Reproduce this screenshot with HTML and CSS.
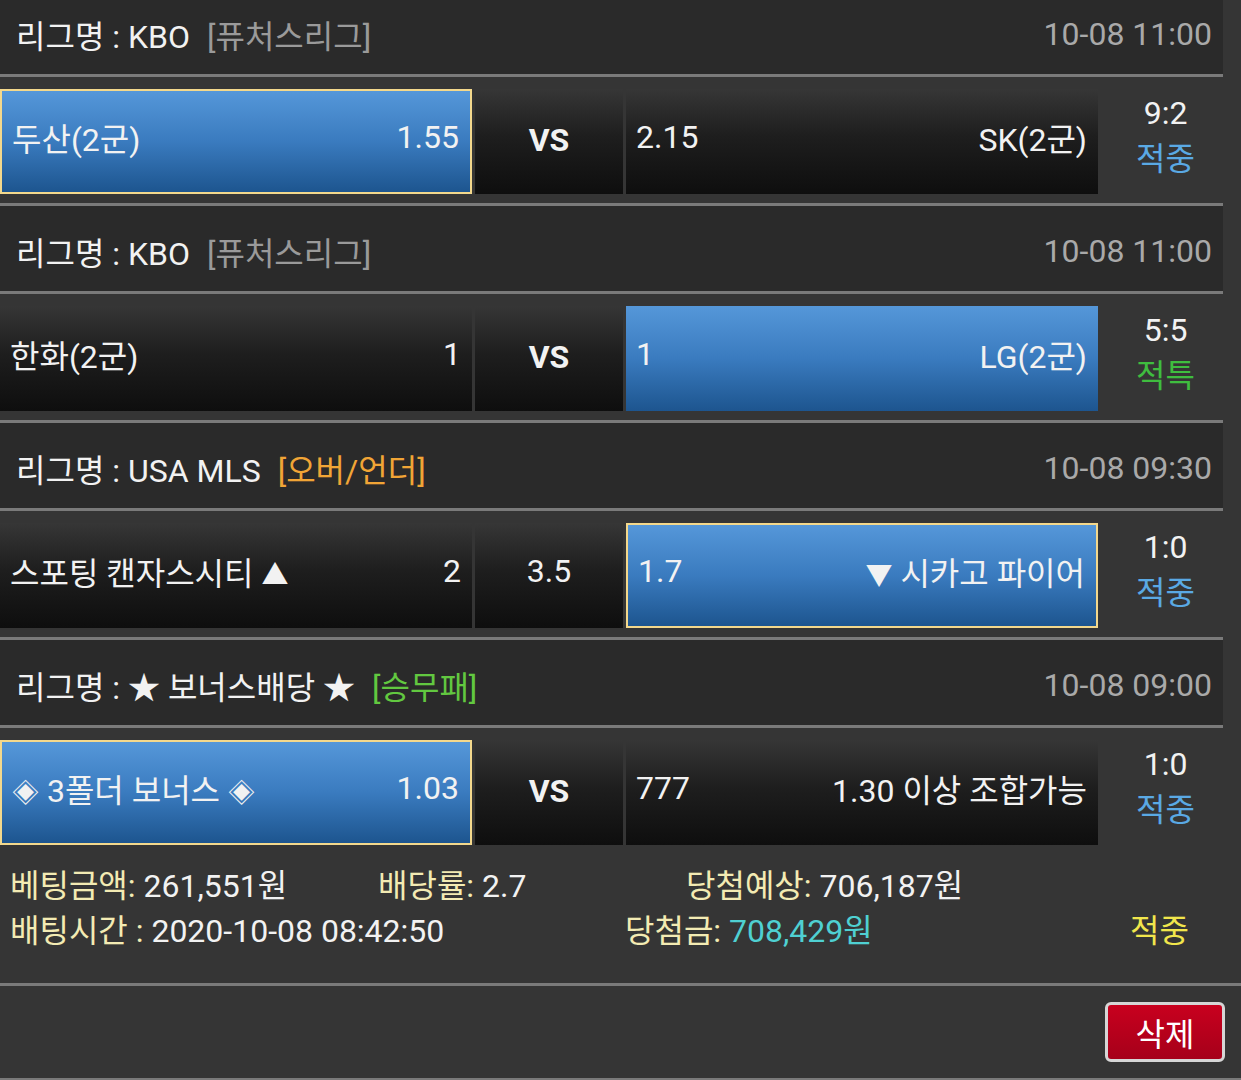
FILE: index.html
```html
<!DOCTYPE html>
<html lang="ko">
<head>
    <meta charset="UTF-8">
    <meta name="viewport" content="width=device-width, initial-scale=1.0">
    <title>배팅내역</title>
    <link rel="stylesheet" href="styles.css">
</head>
<body>
    <div class="games">
        <div class="game">
            <div class="league">
                <span class="league-name">리그명 : KBO</span>
                <span class="tag gray">[퓨처스리그]</span>
                <span class="time">10-08 11:00</span>
            </div>
            <div class="match">
                <div class="pick home blue selected"><span>두산(2군)</span><span>1.55</span></div>
                <div class="mid vs">VS</div>
                <div class="pick away"><span>2.15</span><span>SK(2군)</span></div>
                <div class="result"><div class="score">9:2</div><div class="status hit">적중</div></div>
            </div>
        </div>

        <div class="game">
            <div class="league">
                <span class="league-name">리그명 : KBO</span>
                <span class="tag gray">[퓨처스리그]</span>
                <span class="time">10-08 11:00</span>
            </div>
            <div class="match">
                <div class="pick home"><span>한화(2군)</span><span>1</span></div>
                <div class="mid vs">VS</div>
                <div class="pick away blue"><span>1</span><span>LG(2군)</span></div>
                <div class="result"><div class="score">5:5</div><div class="status special">적특</div></div>
            </div>
        </div>

        <div class="game">
            <div class="league">
                <span class="league-name">리그명 : USA MLS</span>
                <span class="tag orange">[오버/언더]</span>
                <span class="time">10-08 09:30</span>
            </div>
            <div class="match">
                <div class="pick home"><span>스포팅 캔자스시티 <i class="mark">▲</i></span><span>2</span></div>
                <div class="mid">3.5</div>
                <div class="pick away blue selected"><span>1.7</span><span><i class="mark">▼</i> 시카고 파이어</span></div>
                <div class="result"><div class="score">1:0</div><div class="status hit">적중</div></div>
            </div>
        </div>

        <div class="game">
            <div class="league">
                <span class="league-name">리그명 : ★ 보너스배당 ★</span>
                <span class="tag green">[승무패]</span>
                <span class="time">10-08 09:00</span>
            </div>
            <div class="match">
                <div class="pick home blue selected"><span><i class="mark">◈</i> 3폴더 보너스 <i class="mark">◈</i></span><span>1.03</span></div>
                <div class="mid vs">VS</div>
                <div class="pick away"><span>777</span><span>1.30 이상 조합가능</span></div>
                <div class="result"><div class="score">1:0</div><div class="status hit">적중</div></div>
            </div>
        </div>
    </div>

    <div class="summary">
        <div class="summary-row">
            <span class="col-amount"><em>베팅금액:</em> 261,551원</span>
            <span class="col-rate"><em>배당률:</em> 2.7</span>
            <span><em>당첨예상:</em> 706,187원</span>
        </div>
        <div class="summary-row">
            <span class="col-date"><em>배팅시간 :</em> 2020-10-08 08:42:50</span>
            <span class="col-win"><em>당첨금:</em> <b class="win-money">708,429원</b></span>
            <span class="final">적중</span>
        </div>
    </div>

    <div class="actions">
        <button class="btn-delete">삭제</button>
    </div>
</body>
</html>
```

FILE: styles.css
```css
body {
    margin: 0;
    padding: 0;
    background-color: #353535;
    color: #f2f2f2;
    font-family: Roboto, "Noto Sans CJK KR", sans-serif;
    font-size: 32px;
    height: 1080px;
    overflow: hidden;
}

.games {
    width: 1223px;
    margin-top: -11px; /* list is scrolled a little */
}

/* league header */
.league {
    display: flex;
    align-items: center;
    height: 81px;
    padding: 4px 11px 0 16px;
    background-color: #2a2a2a;
    border-bottom: 3px solid #7a7a7a;
    white-space: nowrap;
}

.tag {
    margin-left: 17px;
}

.tag.gray { color: #9a9a9a; }
.tag.orange { color: #f1a536; }
.tag.green { color: #62c840; }

.time {
    margin-left: auto;
    color: #a9a9a9;
}

/* match row */
.match {
    display: flex;
    height: 105px;
    padding: 12px 0 9px;
    border-bottom: 3px solid #7a7a7a;
}

.game:last-child .match {
    border-bottom: none;
}

.pick,
.mid {
    height: 105px;
    box-sizing: border-box;
    padding-bottom: 10px;
    background: linear-gradient(#363636, #1e1e1e 45%, #0e0e0e);
    white-space: nowrap;
}

.pick {
    width: 472px;
    display: flex;
    justify-content: space-between;
    align-items: center;
    padding-left: 10px;
    padding-right: 11px;
}

.pick.blue {
    background: linear-gradient(#5597d9, #3a7bbf 50%, #1d558f);
}

.pick.selected {
    border: 2px solid #f3d88c;
}

.mark {
    font-style: normal;
    font-size: 27px;
}

.mid {
    width: 148px;
    margin: 0 3px;
    display: flex;
    justify-content: center;
    align-items: center;
}

.mid.vs {
    font-weight: bold;
    padding-bottom: 4px;
}

.result {
    flex: 1;
    display: flex;
    flex-direction: column;
    justify-content: center;
    align-items: center;
    line-height: 46px;
    padding: 0 0 12px 10px;
}

.status.hit { color: #5aa9e4; }
.status.special { color: #3fbd3f; }

/* bet summary */
.summary {
    padding: 10px 0 29px 10px;
    line-height: 45px;
    border-bottom: 3px solid #7a7a7a;
}

.summary-row {
    display: flex;
    white-space: nowrap;
}

.summary em {
    font-style: normal;
    color: #f3ebb3;
}

.col-amount { width: 368px; }
.col-rate { width: 308px; }
.col-date { width: 615px; }
.col-win { width: 505px; }

.win-money {
    font-weight: normal;
    color: #4fd0d2;
}

.final {
    color: #f1e64c;
}

.actions {
    display: flex;
    justify-content: flex-end;
    padding: 16px 16px 16px 0;
    border-bottom: 3px solid #7a7a7a;
}

.btn-delete {
    width: 120px;
    height: 60px;
    border: 3px solid #d6d6d6;
    border-radius: 6px;
    background: linear-gradient(#c8001e, #a6001a);
    color: white;
    font-family: Roboto, "Noto Sans CJK KR", sans-serif;
    font-size: 32px;
    padding: 0;
    cursor: pointer;
}
```
